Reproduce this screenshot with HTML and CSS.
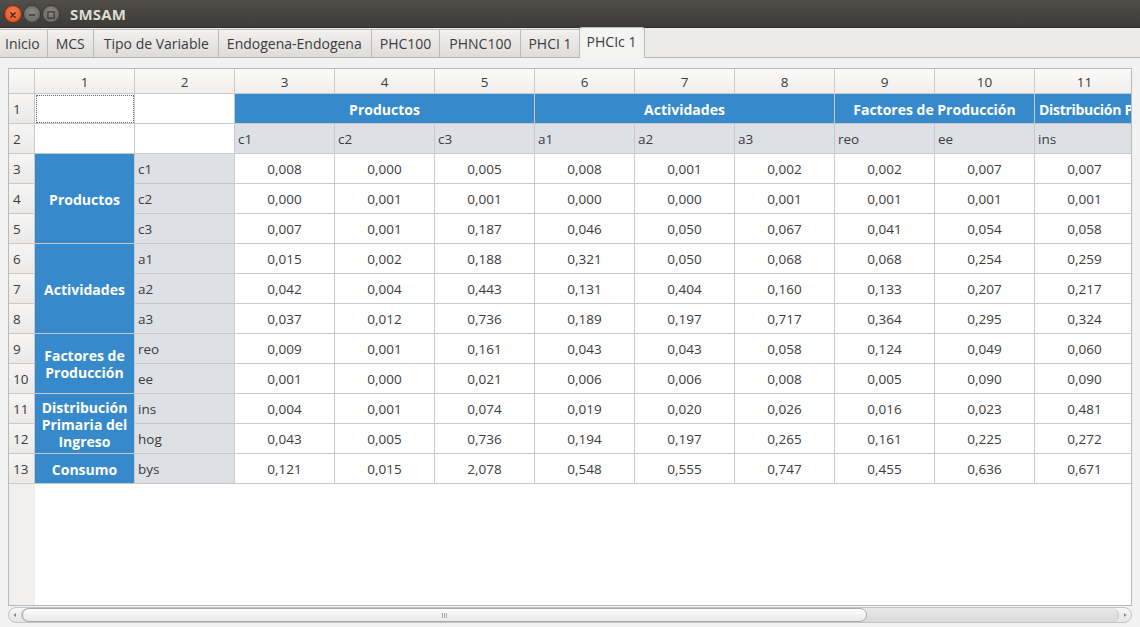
FILE: index.html
```html
<!DOCTYPE html>
<html lang="es">
<head>
<meta charset="utf-8">
<title>SMSAM</title>
<link rel="stylesheet" href="styles.css">
</head>
<body>
<div class="window">
  <header class="titlebar">
    <div class="controls">
      <span class="btn close"><svg width="18" height="18" viewBox="0 0 18 18"><path d="M6.5 6.5l5 5M11.5 6.5l-5 5" stroke="#3a1a10" stroke-width="1.3" stroke-linecap="round"/></svg></span>
      <span class="btn"><svg width="18" height="18" viewBox="0 0 18 18"><path d="M5.5 9h7" stroke="#2e2d2a" stroke-width="1.4"/></svg></span>
      <span class="btn"><svg width="18" height="18" viewBox="0 0 18 18"><rect x="5.5" y="5.5" width="7" height="7" fill="none" stroke="#2e2d2a" stroke-width="1.2"/></svg></span>
    </div>
    <div class="title">SMSAM</div>
  </header>
  <nav class="tabs">
    <span class="tab">Inicio</span>
    <span class="tab">MCS</span>
    <span class="tab">Tipo de Variable</span>
    <span class="tab">Endogena-Endogena</span>
    <span class="tab">PHC100</span>
    <span class="tab">PHNC100</span>
    <span class="tab">PHCI 1</span>
    <span class="tab active">PHCIc 1</span>
  </nav>
  <main class="panel">
    <div class="frame">
      <div class="viewport">
        <table class="grid">
          <colgroup>
            <col class="c-rh"><col class="c"><col class="c"><col class="c"><col class="c"><col class="c"><col class="c"><col class="c"><col class="c"><col class="c"><col class="c"><col class="c">
          </colgroup>
          <thead>
            <tr class="hdr">
              <th class="corner"></th><th>1</th><th>2</th><th>3</th><th>4</th><th>5</th><th>6</th><th>7</th><th>8</th><th>9</th><th>10</th><th>11</th>
            </tr>
          </thead>
          <tbody>
            <tr>
              <th class="rh">1</th><td class="focus"></td><td></td>
              <td class="blue" colspan="3">Productos</td>
              <td class="blue" colspan="3">Actividades</td>
              <td class="blue" colspan="2">Factores de Producción</td>
              <td class="blue clip">Distribución Primaria del Ingreso</td>
            </tr>
            <tr>
              <th class="rh">2</th><td></td><td></td>
              <td class="lbl">c1</td><td class="lbl">c2</td><td class="lbl">c3</td><td class="lbl">a1</td><td class="lbl">a2</td><td class="lbl">a3</td><td class="lbl">reo</td><td class="lbl">ee</td><td class="lbl">ins</td>
            </tr>
            <tr>
              <th class="rh">3</th><td class="blue" rowspan="3">Productos</td><td class="lbl">c1</td>
              <td>0,008</td><td>0,000</td><td>0,005</td><td>0,008</td><td>0,001</td><td>0,002</td><td>0,002</td><td>0,007</td><td>0,007</td>
            </tr>
            <tr>
              <th class="rh">4</th><td class="lbl">c2</td>
              <td>0,000</td><td>0,001</td><td>0,001</td><td>0,000</td><td>0,000</td><td>0,001</td><td>0,001</td><td>0,001</td><td>0,001</td>
            </tr>
            <tr>
              <th class="rh">5</th><td class="lbl">c3</td>
              <td>0,007</td><td>0,001</td><td>0,187</td><td>0,046</td><td>0,050</td><td>0,067</td><td>0,041</td><td>0,054</td><td>0,058</td>
            </tr>
            <tr>
              <th class="rh">6</th><td class="blue" rowspan="3">Actividades</td><td class="lbl">a1</td>
              <td>0,015</td><td>0,002</td><td>0,188</td><td>0,321</td><td>0,050</td><td>0,068</td><td>0,068</td><td>0,254</td><td>0,259</td>
            </tr>
            <tr>
              <th class="rh">7</th><td class="lbl">a2</td>
              <td>0,042</td><td>0,004</td><td>0,443</td><td>0,131</td><td>0,404</td><td>0,160</td><td>0,133</td><td>0,207</td><td>0,217</td>
            </tr>
            <tr>
              <th class="rh">8</th><td class="lbl">a3</td>
              <td>0,037</td><td>0,012</td><td>0,736</td><td>0,189</td><td>0,197</td><td>0,717</td><td>0,364</td><td>0,295</td><td>0,324</td>
            </tr>
            <tr>
              <th class="rh">9</th><td class="blue" rowspan="2">Factores de<br>Producción</td><td class="lbl">reo</td>
              <td>0,009</td><td>0,001</td><td>0,161</td><td>0,043</td><td>0,043</td><td>0,058</td><td>0,124</td><td>0,049</td><td>0,060</td>
            </tr>
            <tr>
              <th class="rh">10</th><td class="lbl">ee</td>
              <td>0,001</td><td>0,000</td><td>0,021</td><td>0,006</td><td>0,006</td><td>0,008</td><td>0,005</td><td>0,090</td><td>0,090</td>
            </tr>
            <tr>
              <th class="rh">11</th><td class="blue" rowspan="2">Distribución<br>Primaria del<br>Ingreso</td><td class="lbl">ins</td>
              <td>0,004</td><td>0,001</td><td>0,074</td><td>0,019</td><td>0,020</td><td>0,026</td><td>0,016</td><td>0,023</td><td>0,481</td>
            </tr>
            <tr>
              <th class="rh">12</th><td class="lbl">hog</td>
              <td>0,043</td><td>0,005</td><td>0,736</td><td>0,194</td><td>0,197</td><td>0,265</td><td>0,161</td><td>0,225</td><td>0,272</td>
            </tr>
            <tr>
              <th class="rh">13</th><td class="blue">Consumo</td><td class="lbl">bys</td>
              <td>0,121</td><td>0,015</td><td>2,078</td><td>0,548</td><td>0,555</td><td>0,747</td><td>0,455</td><td>0,636</td><td>0,671</td>
            </tr>
          </tbody>
        </table>
      </div>
    </div>
    <div class="hscroll">
      <span class="arrow left"><svg width="6" height="6" viewBox="0 0 6 6"><path d="M4 1L1.5 3 4 5z" fill="#888"/></svg></span>
      <div class="track">
        <div class="thumb"><span class="grip"></span></div>
      </div>
      <span class="arrow right"><svg width="6" height="6" viewBox="0 0 6 6"><path d="M2 1l2.5 2L2 5z" fill="#888"/></svg></span>
    </div>
  </main>
</div>
</body>
</html>
```
FILE: styles.css
```css
* { box-sizing: border-box; }
html, body { margin: 0; padding: 0; }
body {
  width: 1140px;
  height: 627px;
  overflow: hidden;
  font-family: "Open Sans", "Noto Sans", sans-serif;
  font-size: 13.5px;
  color: #3c3c3c;
  background: #f2f2f2;
}
.window { display: flex; flex-direction: column; height: 627px; }

.titlebar {
  height: 28px;
  flex: none;
  display: flex;
  align-items: center;
  background: linear-gradient(#514f4a, #3c3b37);
  border-bottom: 1px solid #2e2d2a;
}
.controls { display: flex; gap: 1px; padding-left: 4px; }
.btn {
  width: 18px; height: 18px;
  border-radius: 50%;
  background: radial-gradient(circle at 50% 40%, #8a8984, #5f5e5a);
  border: 1px solid #3a3935;
  display: flex;
}
.btn.close { background: radial-gradient(circle at 50% 40%, #f47a4e, #de4f1c); border-color: #7a2e12; }
.title {
  margin-left: 10px;
  color: #dfdbd2;
  font-weight: bold;
  font-size: 15px;
  letter-spacing: 0.2px;
}

.tabs {
  height: 30px;
  flex: none;
  display: flex;
  align-items: flex-end;
  background: #edecea;
  border-bottom: 1px solid #b8b6b2;
}
.tab {
  height: 28px;
  padding: 0 8px;
  display: flex;
  align-items: center;
  font-size: 14px;
  background: linear-gradient(#f2f1f0, #dedcd9);
  border: 1px solid #bdbab5;
  border-bottom: none;
  border-left: none;
  color: #3c3c3c;
  white-space: nowrap;
}
.tab:nth-child(1) { padding: 0 7px 0 5px; }
.tab:nth-child(3) { padding: 0 9px 0 10px; }
.tab:nth-child(4) { padding: 0 9px 0 8px; }
.tab:nth-child(6) { padding: 0 9px; }
.tab:nth-child(7) { padding: 0 7px; }
.tab.active {
  height: 31px;
  margin-bottom: -1px;
  background: #f4f4f3;
  border-left: 1px solid #bdbab5;
  border-radius: 3px 3px 0 0;
  padding: 0 8px 3px 7px;
  margin-left: -1px;
}

.panel { flex: 1; display: flex; flex-direction: column; padding: 10px 8px 0 8px; }
.frame {
  height: 538px;
  border: 1px solid #b9b9b9;
  background: linear-gradient(to right, #f1f0ef 26px, #ffffff 26px);
  overflow: hidden;
}
.viewport { width: 1122px; overflow: hidden; }
.grid {
  table-layout: fixed;
  width: 1126px;
  border-collapse: separate;
  border-spacing: 0;
}
.c-rh { width: 26px; }
.c { width: 100px; }
.grid th, .grid td {
  padding: 0 3px;
  border-right: 1px solid #c9c9c9;
  border-bottom: 1px solid #c9c9c9;
  white-space: nowrap;
  overflow: hidden;
  font-weight: normal;
}
.hdr th {
  height: 25px;
  text-align: center;
  background: linear-gradient(#fbfbfa, #efeeec);
  color: #3c3c3c;
  padding: 1px 0 0 0;
}
.grid tbody tr { height: 30px; }
.grid td { text-align: center; background: #fff; padding-top: 1px; }
.rh {
  text-align: left;
  background: linear-gradient(#f6f5f4, #ebeae8);
  padding-left: 4px !important;
  padding-top: 1px !important;
}
.grid td.lbl { text-align: left; background: #dde1e5; }
.grid td.blue {
  background: #368acb;
  color: #fff;
  font-weight: bold;
  font-size: 14px;
  line-height: 17px;
}
.grid td.clip { text-align: left; padding-left: 4px; letter-spacing: -0.3px; }
.grid td.focus { outline: 1px dotted #666; outline-offset: -2px; }

.hscroll {
  height: 16px;
  margin-top: 1px;
  display: flex;
  align-items: center;
  background: linear-gradient(#f8f8f8, #e4e4e4);
  border: 1px solid #c4c4c4;
  border-radius: 8px;
}
.arrow { width: 12px; height: 14px; display: flex; align-items: center; justify-content: center; flex: none; }
.track { flex: 1; height: 14px; display: flex; align-items: center; border-left: 1px solid #c4c4c4; border-right: 1px solid #c4c4c4; border-radius: 7px; background: linear-gradient(#e8e8e8, #dadada); }
.thumb {
  width: 845px;
  height: 14px;
  border: 1px solid #aaa;
  border-radius: 7px;
  background: linear-gradient(#fefefe, #e9e9e9);
  display: flex;
  align-items: center;
  justify-content: center;
}
.grip {
  width: 6px; height: 5px;
  background: repeating-linear-gradient(to right, #aaa 0 1px, transparent 1px 2px);
}
```
